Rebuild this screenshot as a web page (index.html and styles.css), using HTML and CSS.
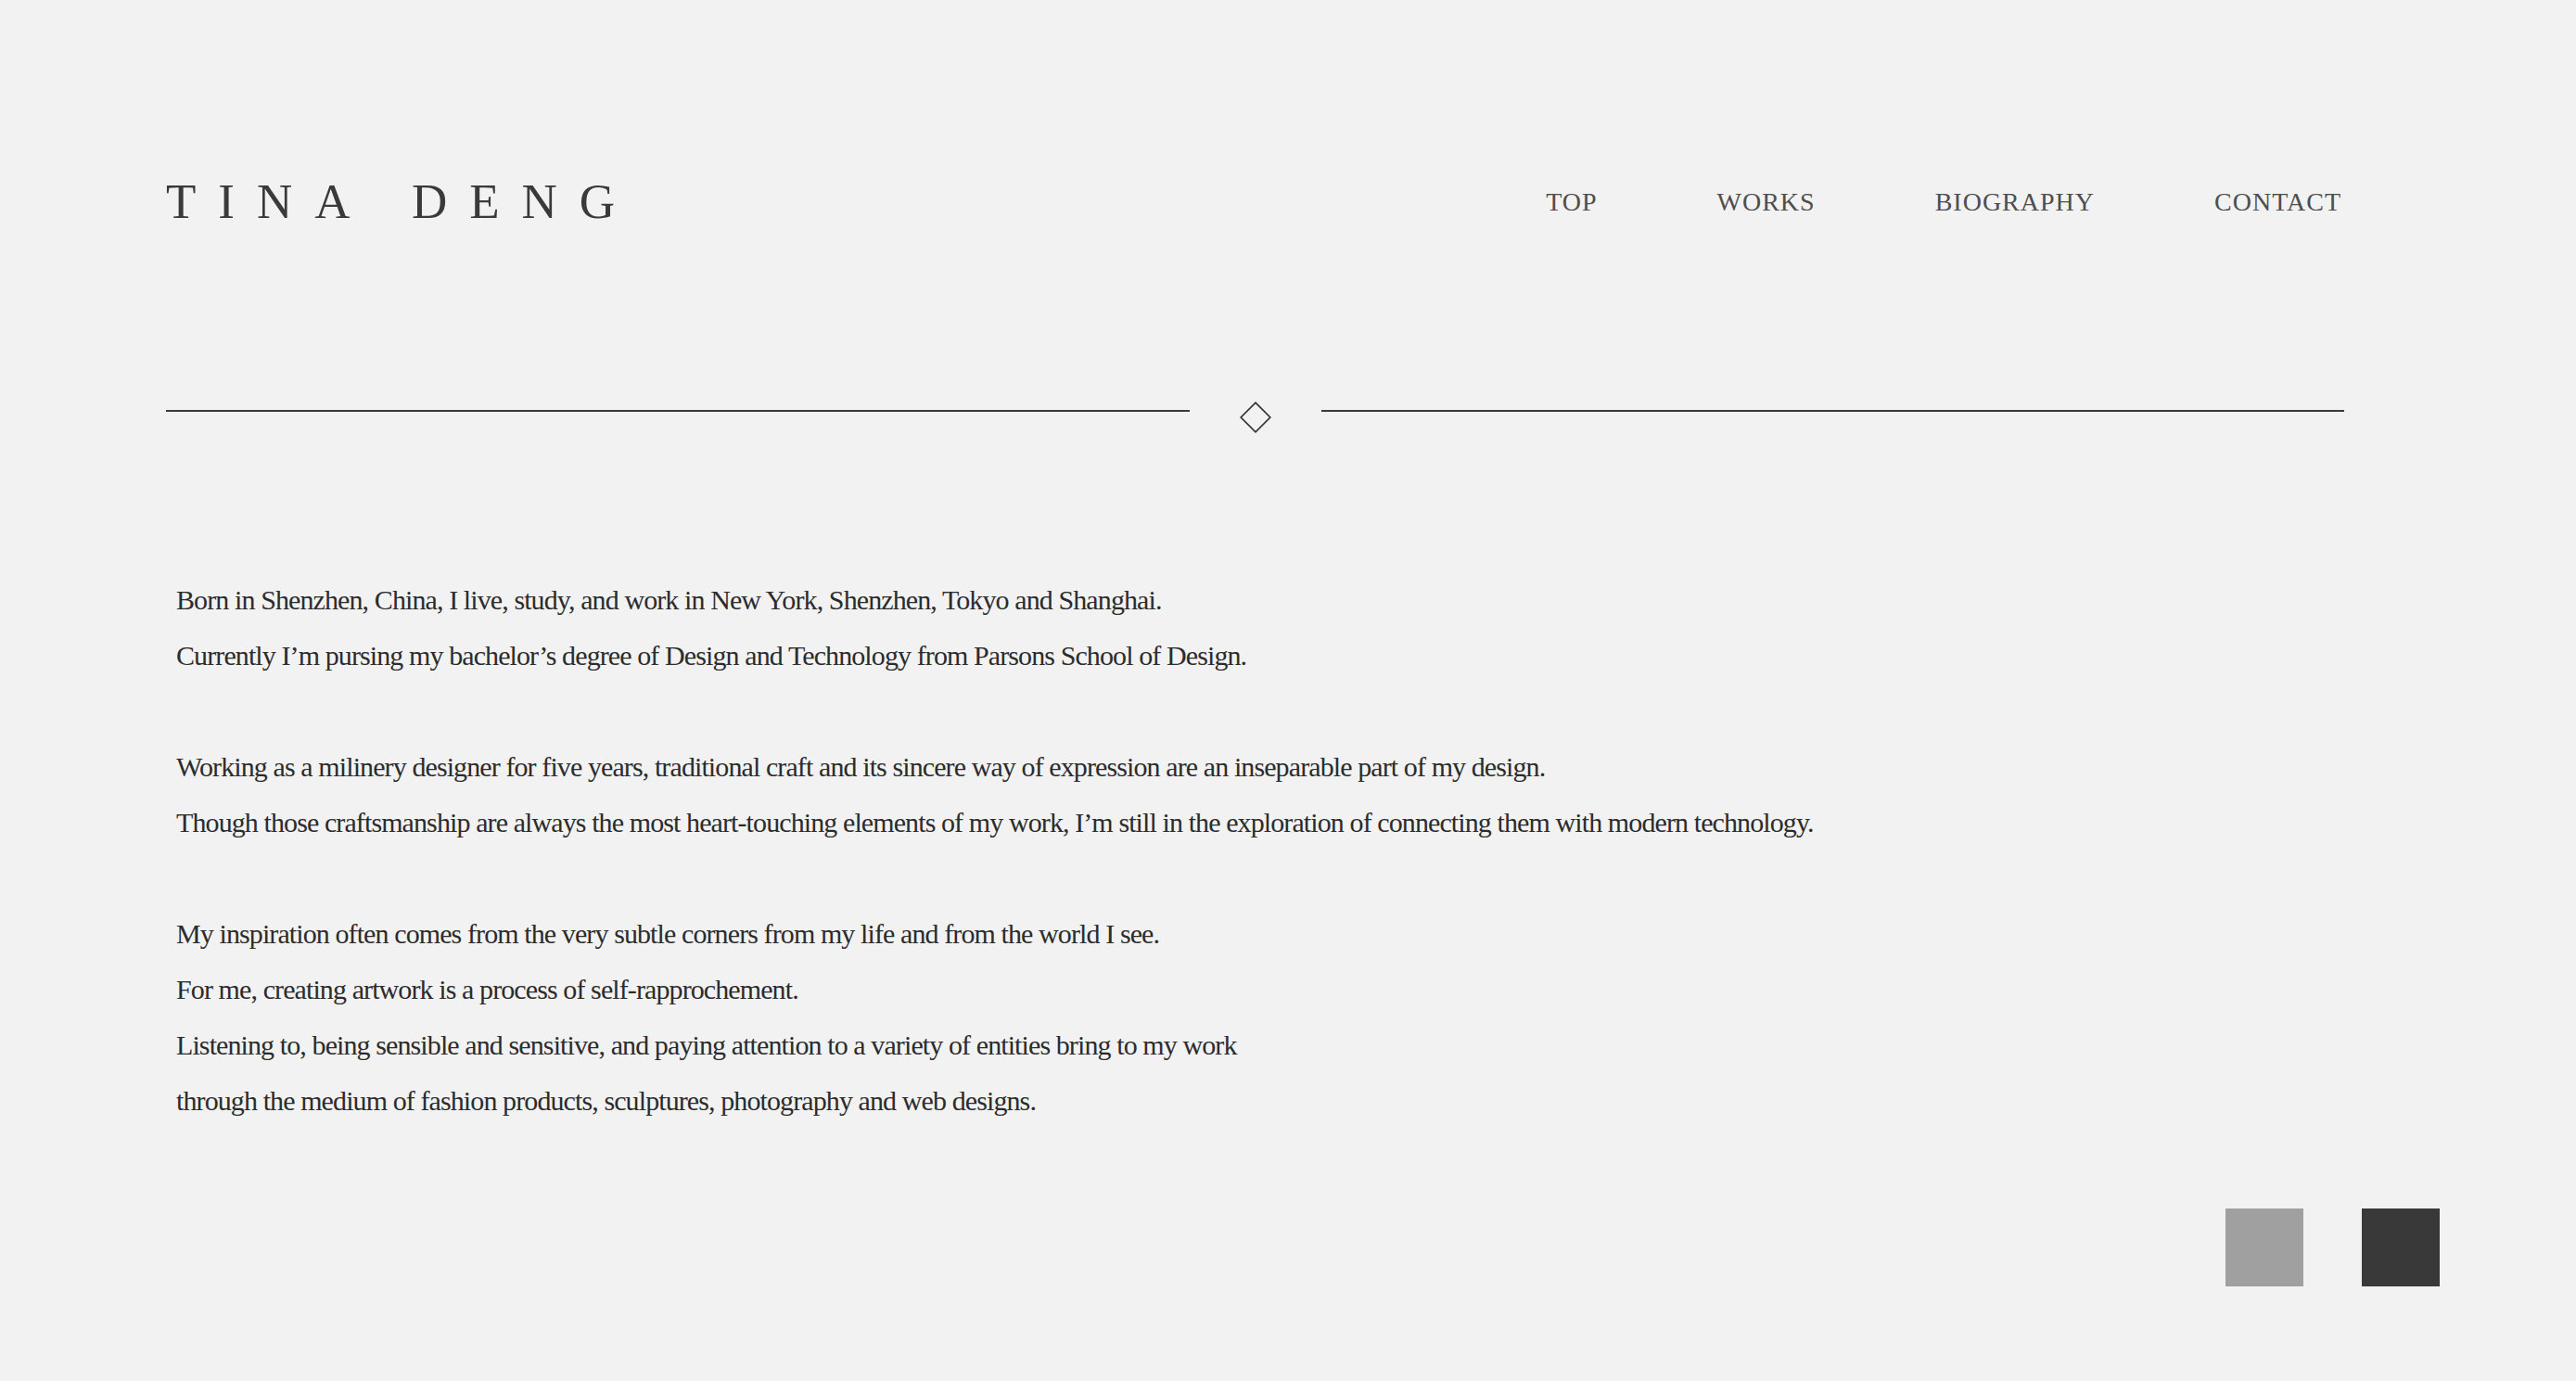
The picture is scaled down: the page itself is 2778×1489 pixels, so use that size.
FILE: index.html
```html
<!DOCTYPE html>
<html lang="en">
<head>
<meta charset="utf-8">
<title>Tina Deng — Biography</title>
<link rel="stylesheet" href="styles.css">
</head>
<body>
<div class="page">
  <header class="header">
    <h1 class="logo">TINA DENG</h1>
    <nav class="nav">
      <a class="nav-link" href="#">TOP</a>
      <a class="nav-link" href="#">WORKS</a>
      <a class="nav-link" href="#">BIOGRAPHY</a>
      <a class="nav-link" href="#">CONTACT</a>
    </nav>
  </header>

  <div class="divider">
    <span class="divider-line"></span>
    <span class="divider-mark">
      <svg class="diamond" width="34" height="34" viewBox="0 0 34 34" aria-hidden="true">
        <polygon points="17,1.2 32.8,17 17,32.8 1.2,17" fill="none" stroke="#333" stroke-width="1.7"/>
      </svg>
    </span>
    <span class="divider-line"></span>
  </div>

  <main class="bio">
    <p class="bio-para">Born in Shenzhen, China, I live, study, and work in New York, Shenzhen, Tokyo and Shanghai.<br>Currently I’m pursing my bachelor’s degree of Design and Technology from Parsons School of Design.</p>
    <p class="bio-para">Working as a milinery designer for five years, traditional craft and its sincere way of expression are an inseparable part of my design.<br>Though those craftsmanship are always the most heart-touching elements of my work, I’m still in the exploration of connecting them with modern technology.</p>
    <p class="bio-para">My inspiration often comes from the very subtle corners from my life and from the world I see.<br>For me, creating artwork is a process of self-rapprochement.<br>Listening to, being sensible and sensitive, and paying attention to a variety of entities bring to my work<br>through the medium of fashion products, sculptures, photography and web designs.</p>
  </main>
</div>

<div class="theme-switch">
  <button class="swatch swatch-light" aria-label="Light theme"></button>
  <button class="swatch swatch-dark" aria-label="Dark theme"></button>
</div>
</body>
</html>
```

FILE: styles.css
```css
html, body {
  margin: 0;
  padding: 0;
  background: #f2f2f2;
}

body {
  font-family: "Liberation Serif", "Times New Roman", serif;
  color: #2f2f2f;
}

.page {
  padding: 191px 250px 0 179px;
}

.header {
  display: flex;
  align-items: center;
  justify-content: space-between;
}

.logo {
  margin: 0;
  font-size: 53px;
  line-height: 53px;
  font-weight: normal;
  letter-spacing: 24px;
  word-spacing: 8px;
  color: #3a3a3a;
}

.nav {
  display: flex;
  gap: 129px;
  margin-right: 3px;
}

.nav-link {
  font-size: 28px;
  line-height: 28px;
  letter-spacing: 1px;
  color: #4e4e4e;
  text-decoration: none;
}

.divider {
  display: flex;
  align-items: flex-start;
  height: 34px;
  margin-top: 189px;
}

.divider-line {
  flex: 1;
  height: 2px;
  margin-top: 9px;
  background: #3a3a3a;
}

.divider-mark {
  width: 142px;
  display: flex;
  justify-content: center;
}

.diamond {
  display: block;
  margin-top: -0.5px;
}

.bio {
  margin-top: 150px;
  padding-left: 11px;
}

.bio-para {
  margin: 0 0 60px;
  font-size: 30px;
  line-height: 60px;
  letter-spacing: -0.9px;
  color: #2c2c2c;
}

.bio-para:last-child {
  margin-bottom: 0;
}

.theme-switch {
  position: fixed;
  right: 147px;
  bottom: 102px;
  display: flex;
  gap: 63px;
}

.swatch {
  width: 84px;
  height: 84px;
  border: 0;
  padding: 0;
  margin: 0;
  cursor: pointer;
}

.swatch-light {
  background: #a0a0a0;
}

.swatch-dark {
  background: #393939;
}
```
